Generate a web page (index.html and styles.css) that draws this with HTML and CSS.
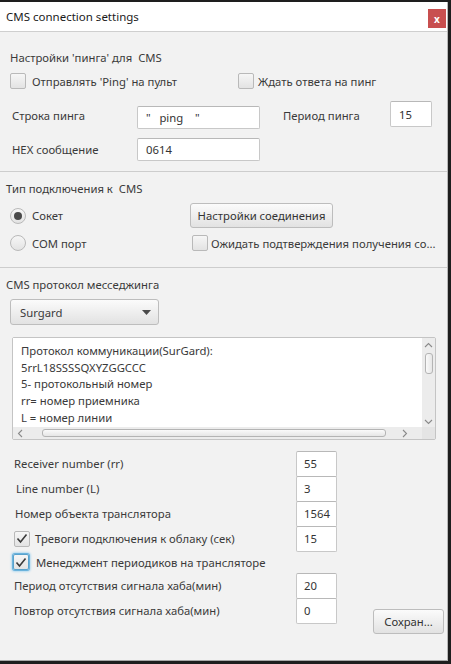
FILE: index.html
```html
<!DOCTYPE html>
<html>
<head>
<meta charset="utf-8">
<link rel="stylesheet" href="styles.css">
</head>
<body>
<div class="window">
  <div class="titlebar">
    <span class="title">CMS connection settings</span>
    <div class="close">x</div>
  </div>
  <div class="content">
    <section class="sec sec1">
      <div class="heading h1">Настройки 'пинга' для&nbsp; CMS</div>
      <div class="row chk-row">
        <label class="chk c-send"><span class="box"></span><span class="txt">Отправлять 'Ping' на пульт</span></label>
        <label class="chk c-wait"><span class="box"></span><span class="txt">Ждать ответа на пинг</span></label>
      </div>
      <div class="row ping-row">
        <span class="lbl l-ping">Строка пинга</span>
        <div class="input in-wide in-ping">"   ping    "</div>
        <span class="lbl l-period">Период пинга</span>
        <div class="input in-period">15</div>
      </div>
      <div class="row hex-row">
        <span class="lbl l-ping">HEX сообщение</span>
        <div class="input in-wide">0614</div>
      </div>
    </section>
    <div class="divider"></div>
    <section class="sec sec2">
      <div class="heading h2">Тип подключения к&nbsp; CMS</div>
      <div class="row conn-row">
        <label class="radio r-col"><span class="dot on"></span><span class="txt">Сокет</span></label>
        <div class="button btn-conn">Настройки соединения</div>
      </div>
      <div class="row com-row">
        <label class="radio r-col"><span class="dot"></span><span class="txt">COM порт</span></label>
        <label class="chk c-confirm"><span class="box"></span><span class="txt">Ожидать подтверждения получения со...</span></label>
      </div>
    </section>
    <div class="divider"></div>
    <section class="sec sec3">
      <div class="heading h2">CMS протокол месседжинга</div>
      <div class="combo">
        <span class="combo-txt">Surgard</span>
        <svg class="combo-arrow" width="9" height="5" viewBox="0 0 9 5"><path d="M0 0H9L4.5 5Z" fill="#4a4a4a"/></svg>
      </div>
      <div class="textarea">
        <div class="ta-main">
          <div class="ta-text">
            <div>Протокол коммуникации(SurGard):</div>
            <div>5rrL18SSSSQXYZGGCCC</div>
            <div>5- протокольный номер</div>
            <div>rr= номер приемника</div>
            <div>L = номер линии</div>
          </div>
          <div class="vscroll">
            <svg class="arr" width="9" height="6" viewBox="0 0 9 6"><path d="M1 5L4.5 1.5L8 5" fill="none" stroke="#8a8a8a" stroke-width="1.1"/></svg>
            <div class="vthumb"></div>
            <div class="vspace"></div>
            <svg class="arr" width="9" height="6" viewBox="0 0 9 6"><path d="M1 1L4.5 4.5L8 1" fill="none" stroke="#8a8a8a" stroke-width="1.1"/></svg>
          </div>
        </div>
        <div class="hscroll">
          <svg class="harr" width="6" height="9" viewBox="0 0 6 9"><path d="M5 1L1.5 4.5L5 8" fill="none" stroke="#8a8a8a" stroke-width="1.1"/></svg>
          <div class="hthumb"></div>
          <div class="hspace"></div>
          <svg class="harr" width="6" height="9" viewBox="0 0 6 9"><path d="M1 1L4.5 4.5L1 8" fill="none" stroke="#8a8a8a" stroke-width="1.1"/></svg>
          <div class="corner"></div>
        </div>
      </div>
      <div class="form-wrap">
        <div class="form">
          <div class="frow"><span class="flbl">Receiver number (rr)</span><div class="input in-num">55</div></div>
          <div class="frow"><span class="flbl f-line">Line number (L)</span><div class="input in-num">3</div></div>
          <div class="frow"><span class="flbl f-obj">Номер объекта транслятора</span><div class="input in-num">1564</div></div>
          <div class="frow"><label class="chk fchk"><span class="box checked"><svg width="12" height="11" viewBox="0 0 12 11"><path d="M1.5 5.5L4.5 9L10.5 1.5" fill="none" stroke="#3a3a3a" stroke-width="1.6"/></svg></span><span class="txt">Тревоги подключения к облаку (сек)</span></label><div class="input in-num">15</div></div>
          <div class="frow frow-chk"><label class="chk fchk2"><span class="box checked focused"><svg width="12" height="11" viewBox="0 0 12 11"><path d="M1.5 5.5L4.5 9L10.5 1.5" fill="none" stroke="#3a3a3a" stroke-width="1.6"/></svg></span><span class="txt">Менеджмент периодиков на трансляторе</span></label></div>
          <div class="frow"><span class="flbl">Период отсутствия сигнала хаба(мин)</span><div class="input in-num">20</div></div>
          <div class="frow"><span class="flbl">Повтор отсутствия сигнала хаба(мин)</span><div class="input in-num">0</div></div>
        </div>
        <div class="button btn-save">Сохран...</div>
      </div>
    </section>
  </div>
</div>
</body>
</html>
```
FILE: styles.css
```css
* { box-sizing: border-box; }
html, body { margin: 0; padding: 0; }
body {
  width: 451px;
  height: 664px;
  background: #1e1e1e;
  font-family: "Noto Sans", "Open Sans", sans-serif;
  font-size: 11.3px;
  color: #3a3a3a;
  overflow: hidden;
}
.window {
  margin-top: 2px;
  width: 448px;
  height: 659px;
  background: #f2f2f2;
  border-bottom: 1px solid #a8a8a8;
  border-right: 1px solid #b8b8b8;
  display: flex;
  flex-direction: column;
}
.titlebar {
  height: 30px;
  background: #fff;
  border-bottom: 1px solid #cfcfcf;
  display: flex;
  align-items: center;
  justify-content: space-between;
  padding-left: 6px;
  padding-right: 1px;
}
.title { font-size: 11.5px; color: #1a1a1a; }
.close {
  width: 18px;
  height: 19px;
  background: #c84f4f;
  color: #fff;
  font-size: 10px;
  font-weight: bold;
  display: flex;
  align-items: center;
  justify-content: center;
  margin-top: 4px;
  line-height: 1;
}
.content { display: flex; flex-direction: column; }
.divider { height: 1px; background: #cdcdcd; }
.sec { display: flex; flex-direction: column; }
.heading { height: 20px; display: flex; align-items: center; white-space: nowrap; }
.h1 { margin-left: 10px; margin-top: 15px; }
.h2 { margin-left: 6px; margin-top: 6px; }
.row { display: flex; align-items: center; }
.lbl { white-space: nowrap; }
.chk, .radio { display: flex; align-items: center; white-space: nowrap; }
.box {
  width: 16px; height: 16px;
  border: 1px solid #b9b9b9;
  border-radius: 2px;
  background: linear-gradient(#f6f6f6, #e3e3e3);
  display: flex; align-items: center; justify-content: center;
  flex: none;
}
.box.focused { box-shadow: 0 0 0 1px #6bb3dc, 0 0 2px 2px #b9dcf0; border-color: #5aa2cc; }
.dot {
  width: 16px; height: 16px;
  border: 1px solid #b9b9b9;
  border-radius: 50%;
  background: linear-gradient(#f6f6f6, #e3e3e3);
  display: flex; align-items: center; justify-content: center;
  flex: none;
}
.dot.on::after {
  content: "";
  width: 8px; height: 8px; border-radius: 50%;
  background: #4a4a4a;
}
.sec1 .chk-row { margin-top: 4px; height: 20px; padding-left: 10px; }
.c-send { width: 228px; }
.c-send .txt { margin-left: 6px; }
.c-wait .txt { margin-left: 4px; }
.ping-row { margin-top: 10px; height: 28px; padding-left: 12px; align-items: center; }
.l-ping { width: 125px; }
.input {
  background: #fff;
  border: 1px solid #c8c8c8;
  border-top-color: #b8b8b8;
  border-radius: 2px;
  height: 24px;
  display: flex; align-items: center;
  padding-left: 8px;
  white-space: pre;
  color: #333;
  flex: none;
}
.in-wide { width: 123px; }
.in-ping { align-self: flex-end; height: 23px; }
.l-period { margin-left: 23px; width: 107px; }
.in-period { width: 42px; height: 26px; align-self: flex-start; }
.hex-row { margin-top: 9px; height: 23px; padding-left: 12px; }
.hex-row .in-wide { height: 23px; }
.sec1 { padding-bottom: 10px; }
.conn-row { margin-top: 5px; height: 25px; padding-left: 10px; }
.r-col { width: 180px; }
.radio .txt { margin-left: 6px; }
.button {
  background: linear-gradient(#fbfbfb, #e2e2e2);
  border: 1px solid #bdbdbd;
  border-radius: 3px;
  display: flex; align-items: center; justify-content: center;
  white-space: nowrap;
  color: #333;
}
.btn-conn { width: 143px; height: 25px; }
.com-row { margin-top: 5px; height: 20px; padding-left: 10px; }
.c-confirm { margin-left: 2px; }
.c-confirm .txt { margin-left: 3px; }
.sec2 { padding-bottom: 14px; }
.combo {
  margin-top: 5px; margin-left: 10px;
  width: 149px; height: 26px;
  background: linear-gradient(#fbfbfb, #e2e2e2);
  border: 1px solid #bdbdbd;
  border-radius: 3px;
  display: flex; align-items: center; justify-content: space-between;
  padding: 0 7px 0 9px;
}
.textarea {
  margin-top: 12px; margin-left: 12px;
  width: 424px; height: 103px;
  border: 1px solid #c4c4c4;
  border-radius: 2px;
  background: #e8e8e8;
  display: flex; flex-direction: column;
}
.ta-main { display: flex; flex: 1; min-height: 0; }
.ta-text {
  flex: 1; background: #fff;
  padding: 5px 0 0 8px;
  line-height: 16.7px;
  overflow: hidden;
  white-space: nowrap;
}
.vscroll {
  width: 13px;
  background: #ececec;
  display: flex; flex-direction: column; align-items: center;
  padding: 4px 0 2px;
}
.vthumb {
  margin-top: 5px;
  width: 8px; height: 21px;
  border: 1px solid #b4b4b4;
  border-radius: 3px;
  background: linear-gradient(90deg, #fafafa, #e6e6e6);
}
.vspace { flex: 1; }
.hscroll {
  height: 12px;
  flex: none;
  display: flex; align-items: center;
  background: #ececec;
  padding-left: 4px;
}
.hthumb {
  margin-left: 5px;
  width: 344px; height: 8px;
  border: 1px solid #b4b4b4;
  border-radius: 3px;
  background: linear-gradient(#fafafa, #e6e6e6);
}
.hspace { flex: 1; }
.harr { margin-right: 14px; }
.corner { width: 13px; height: 12px; background: #e4e4e4; }
.form-wrap { display: flex; align-items: flex-end; margin-top: 11px; }
.form { display: flex; flex-direction: column; width: 370px; margin-bottom: 11px; }
.frow { display: flex; align-items: center; height: 25px; padding-left: 14px; }
.flbl { width: 282px; white-space: nowrap; }
.f-line { padding-left: 2px; }
.f-obj { padding-left: 1px; }
.in-num { width: 41px; height: 26px; padding-left: 7px; }
.fchk { width: 282px; }
.fchk .txt { margin-left: 5px; }
.frow-chk { height: 22px; padding-left: 13px; }
.fchk2 .txt { margin-left: 7px; }
.btn-save { width: 71px; height: 25px; margin-left: 3px; }
```
